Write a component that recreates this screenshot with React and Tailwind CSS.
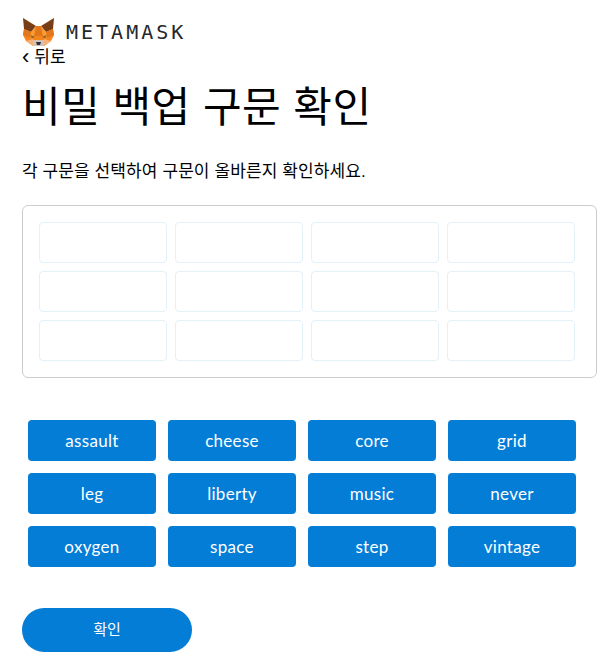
import React from "react";

const words = ["assault", "cheese", "core", "grid", "leg", "liberty", "music", "never", "oxygen", "space", "step", "vintage"];

function Fox() {
  return (
    <svg width="33" height="32" viewBox="0 0 33 32" className="shrink-0">
      <path d="M2 13 L9 16 L14 10 L19 10 L24 16 L31 13 L32 19 L29 25 L22 30 L11 30 L4 25 L1 19 Z" fill="#f6851b" />
      <path d="M1 2 L14 10 L9 16 L2 13 Z" fill="#763d16" />
      <path d="M32 2 L19 10 L24 16 L31 13 Z" fill="#763d16" />
      <path d="M1 2 L14 10 L7 6 Z" fill="#e2761b" />
      <path d="M32 2 L19 10 L26 6 Z" fill="#e2761b" />
      <path d="M14 10 L19 10 L21 20 L12 20 Z" fill="#e2761b" />
      <path d="M2 13 L9 16 L8 22 L1 19 Z" fill="#e4761b" />
      <path d="M31 13 L24 16 L25 22 L32 19 Z" fill="#e4761b" />
      <path d="M9 16 L14 10 L12 20 L8 22 Z" fill="#f89d35" />
      <path d="M24 16 L19 10 L21 20 L25 22 Z" fill="#f89d35" />
      <path d="M8 19 L13 21 L10 22 Z" fill="#8a5a2b" />
      <path d="M25 19 L20 21 L23 22 Z" fill="#8a5a2b" />
      <path d="M4 25 L11 23 L12 30 L11 30 Z" fill="#f5b27a" />
      <path d="M29 25 L22 23 L21 30 L22 30 Z" fill="#f5b27a" />
      <path d="M11 24 L22 24 L22 30 L11 30 Z" fill="#d7c1b3" />
      <path d="M14 26 L19 26 L18 29 L15 29 Z" fill="#233447" />
    </svg>
  );
}

function App() {
  return (
    <div className="w-[610px] h-[659px] overflow-hidden bg-white pl-[22px] pt-4 text-black font-['Liberation_Sans','Noto_Sans_CJK_KR',sans-serif]">
      <div className="flex items-center h-8 gap-[11px]">
        <Fox />
        <span className="font-['DejaVu_Sans_Mono',monospace] text-[20px] font-medium tracking-[3px] text-[#24272a] leading-none">
          METAMASK
        </span>
      </div>

      <button className="flex items-center gap-[5px] text-[17px] leading-5">
        <span className="text-[22px] leading-none -mt-0.5">‹</span>
        뒤로
      </button>

      <h1 className="text-[42px] leading-[50px] mt-[15px] tracking-[0.5px]">비밀 백업 구문 확인</h1>

      <p className="text-[17px] leading-5 mt-[29px] tracking-[0.1px]">각 구문을 선택하여 구문이 올바른지 확인하세요.</p>

      <div className="w-[575px] h-[173px] mt-[23px] border border-[#cccccc] rounded-[6px] p-4">
        <div className="w-[536px] grid grid-cols-4 gap-2">
          {Array.from({ length: 12 }).map((_, i) => (
            <div key={i} className="h-[41px] border border-[#e3f1fb] rounded-[4px]" />
          ))}
        </div>
      </div>

      <div className="w-[548px] ml-1.5 mt-[42px] grid grid-cols-4 gap-x-3 gap-y-3">
        {words.map((word) => (
          <button
            key={word}
            className="h-[41px] bg-[#037dd6] text-white rounded-[4px] text-[17px] tracking-[0.3px] font-['Lato',sans-serif] flex items-center justify-center"
          >
            {word}
          </button>
        ))}
      </div>

      <button className="block w-[170px] h-11 mt-[41px] bg-[#037dd6] text-white rounded-full text-[15px]">확인</button>
    </div>
  );
}

export default App;
